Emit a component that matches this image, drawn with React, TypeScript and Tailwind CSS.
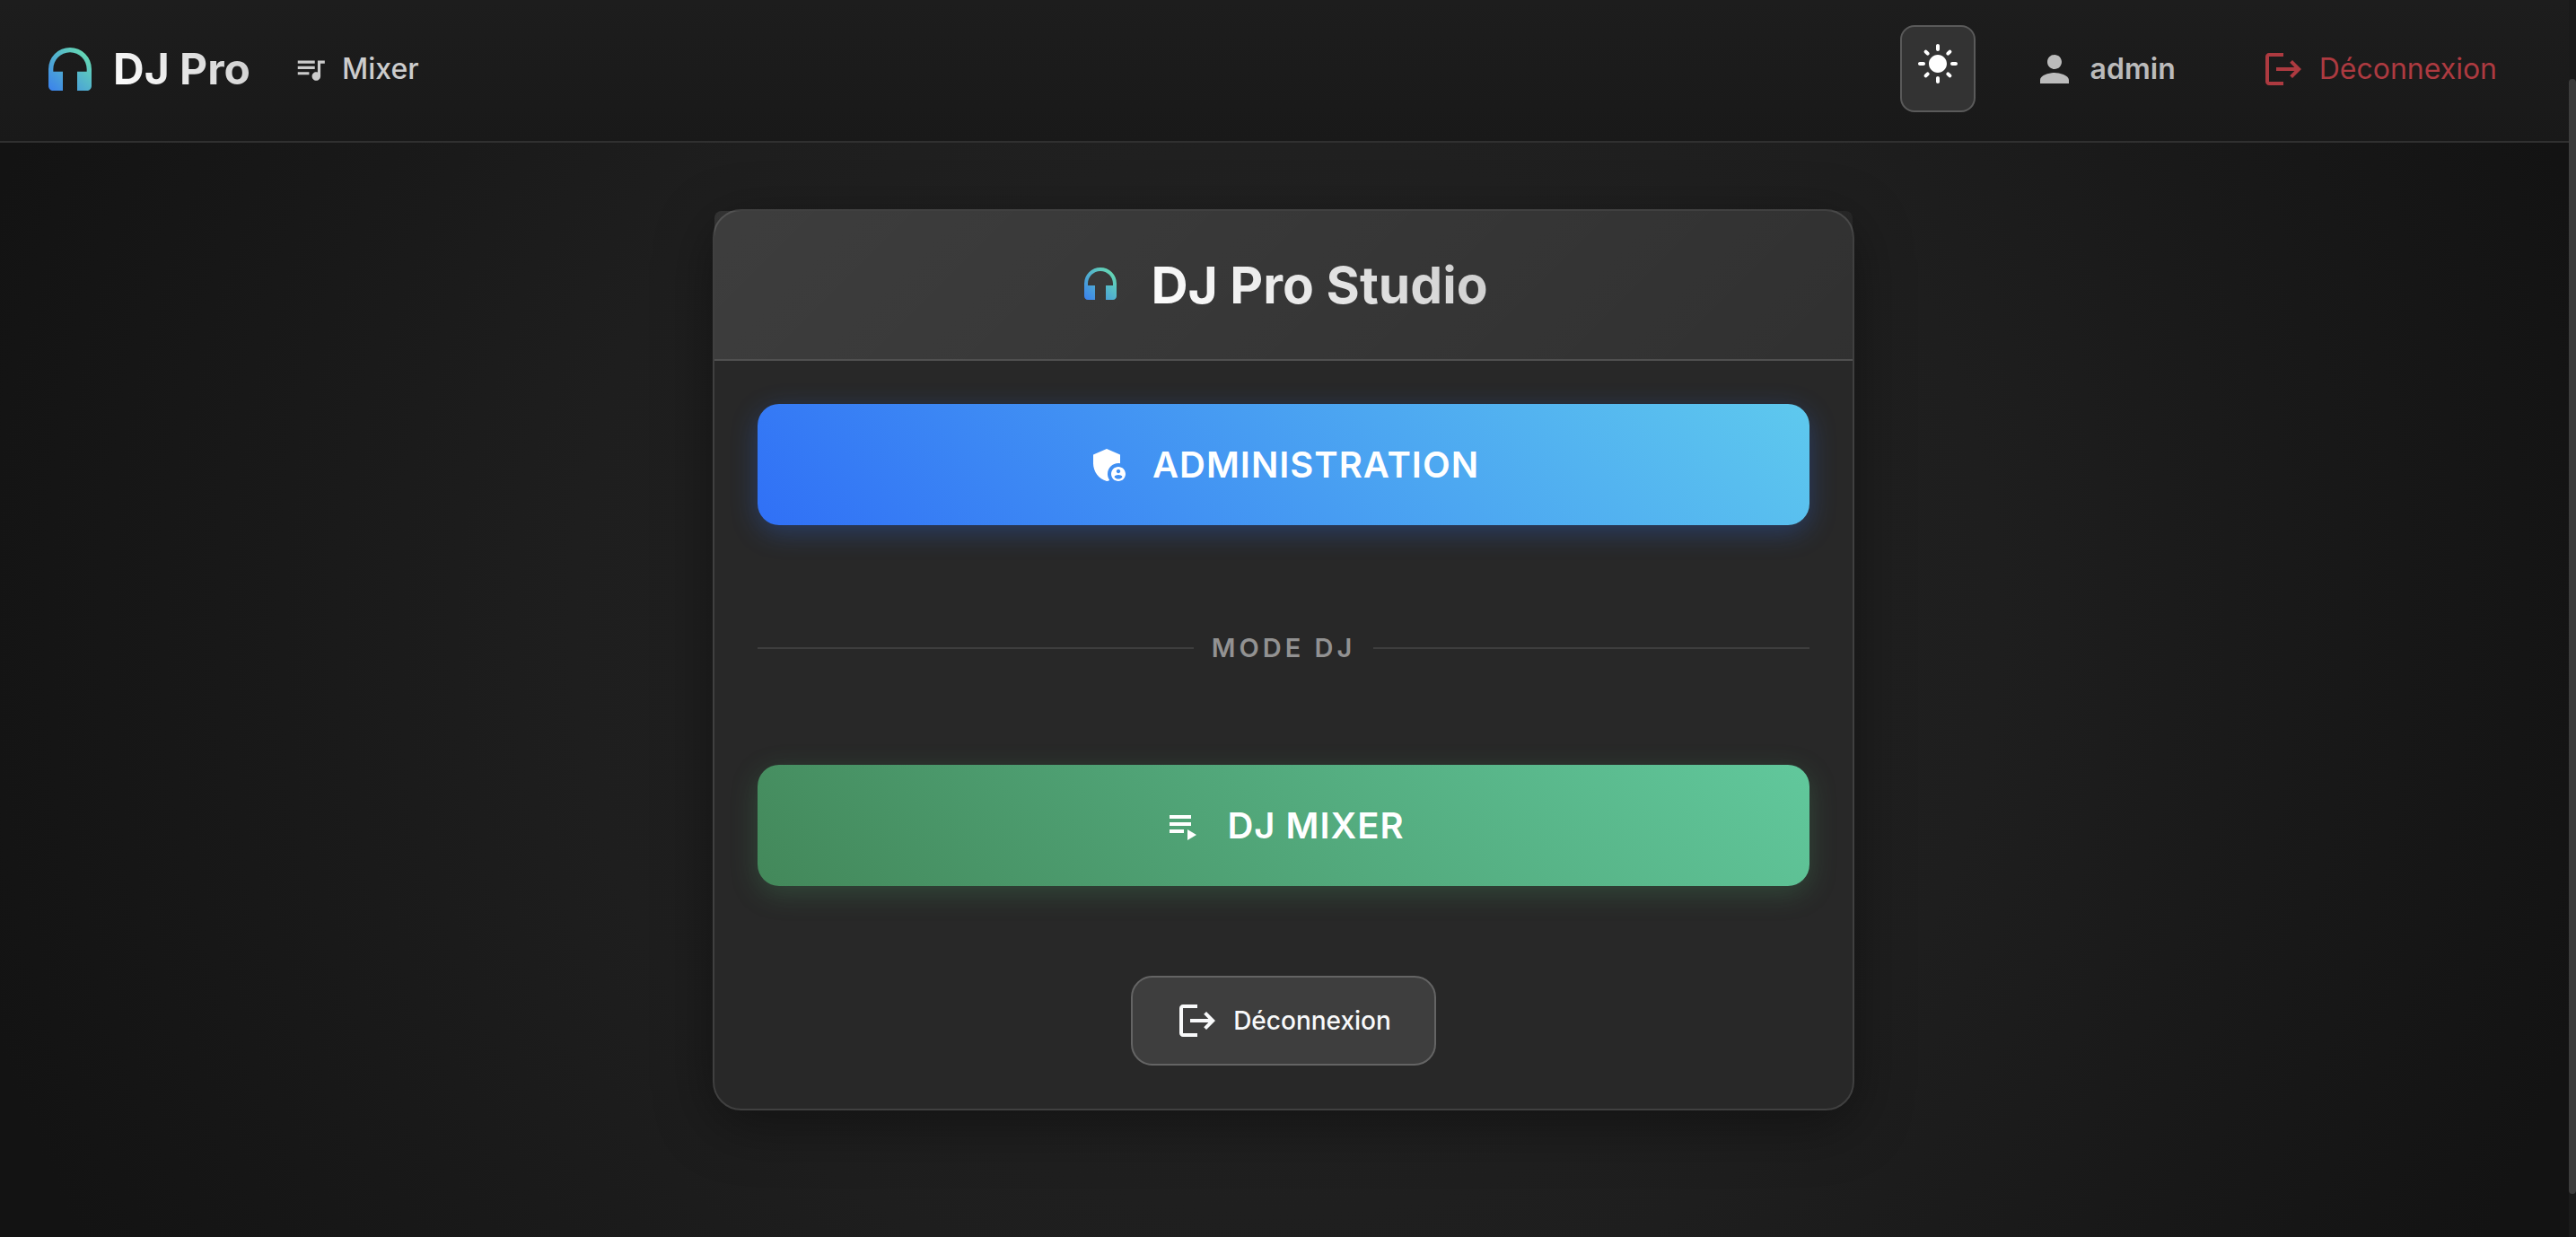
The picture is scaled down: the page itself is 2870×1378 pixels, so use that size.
import React from "react";

type IconProps = { d: string; className?: string };

function Icon({ d, className = "size-12" }: IconProps) {
  return (
    <svg viewBox="0 0 24 24" fill="currentColor" aria-hidden="true" className={`shrink-0 ${className}`}>
      <path d={d} />
    </svg>
  );
}

const QUEUE_MUSIC =
  "M15 6H3v2h12V6zm0 4H3v2h12v-2zM3 16h8v-2H3v2zM17 6v8.18c-.31-.11-.65-.18-1-.18-1.66 0-3 1.34-3 3s1.34 3 3 3 3-1.34 3-3V8h3V6h-5z";
const SUN =
  "M12 7c-2.76 0-5 2.24-5 5s2.24 5 5 5 5-2.24 5-5-2.24-5-5-5zM2 13h2c.55 0 1-.45 1-1s-.45-1-1-1H2c-.55 0-1 .45-1 1s.45 1 1 1zm18 0h2c.55 0 1-.45 1-1s-.45-1-1-1h-2c-.55 0-1 .45-1 1s.45 1 1 1zM11 2v2c0 .55.45 1 1 1s1-.45 1-1V2c0-.55-.45-1-1-1s-1 .45-1 1zm0 18v2c0 .55.45 1 1 1s1-.45 1-1v-2c0-.55-.45-1-1-1s-1 .45-1 1zM5.99 4.58a.996.996 0 0 0-1.41 0 .996.996 0 0 0 0 1.41l1.06 1.06c.39.39 1.03.39 1.41 0s.39-1.03 0-1.41L5.99 4.58zm12.37 12.37a.996.996 0 0 0-1.41 0 .996.996 0 0 0 0 1.41l1.06 1.06c.39.39 1.03.39 1.41 0a.996.996 0 0 0 0-1.41l-1.06-1.06zm1.06-10.96a.996.996 0 0 0 0-1.41.996.996 0 0 0-1.41 0l-1.06 1.06c-.39.39-.39 1.03 0 1.41s1.03.39 1.41 0l1.06-1.06zM7.05 18.36a.996.996 0 0 0 0-1.41.996.996 0 0 0-1.41 0l-1.06 1.06c-.39.39-.39 1.03 0 1.41s1.03.39 1.41 0l1.06-1.06z";
const PERSON =
  "M12 12c2.21 0 4-1.79 4-4s-1.79-4-4-4-4 1.79-4 4 1.79 4 4 4zm0 2c-2.67 0-8 1.34-8 4v2h16v-2c0-2.66-5.33-4-8-4z";
const LOGOUT =
  "M17 7l-1.41 1.41L18.17 11H8v2h10.17l-2.58 2.58L17 17l5-5zM4 5h8V3H4c-1.1 0-2 .9-2 2v14c0 1.1.9 2 2 2h8v-2H4V5z";
const ADMIN =
  "M17 11c.34 0 .67.04 1 .09V6.27L10.5 3 3 6.27v4.91c0 4.54 3.2 8.79 7.5 9.82.55-.13 1.08-.32 1.6-.55-.69-.98-1.1-2.17-1.1-3.45 0-3.31 2.69-6 6-6zM17 13c-2.21 0-4 1.79-4 4s1.79 4 4 4 4-1.79 4-4-1.79-4-4-4zm0 1.38c.62 0 1.12.51 1.12 1.12s-.51 1.12-1.12 1.12-1.12-.51-1.12-1.12.5-1.12 1.12-1.12zm0 5.37c-.93 0-1.74-.46-2.24-1.17.05-.72 1.51-1.08 2.24-1.08s2.19.36 2.24 1.08c-.5.71-1.31 1.17-2.24 1.17z";
const PLAYLIST_PLAY = "M4 10h12v2H4zM4 6h12v2H4zM4 14h8v2H4zM14 14v6l5-3z";

function Headphones({ id, className }: { id: string; className: string }) {
  return (
    <svg viewBox="0 0 24 24" aria-hidden="true" className={`shrink-0 ${className}`}>
      <defs>
        <linearGradient id={id} gradientUnits="userSpaceOnUse" x1="2" y1="22" x2="22" y2="2">
          <stop offset="0.05" stopColor="#3a80ee" />
          <stop offset="0.85" stopColor="#66dbb2" />
        </linearGradient>
      </defs>
      <path
        fill={`url(#${id})`}
        d="M12 3a9 9 0 0 0-9 9v7c0 1.1.9 2 2 2h4v-8H5v-1c0-3.87 3.13-7 7-7s7 3.13 7 7v1h-4v8h4c1.1 0 2-.9 2-2v-7a9 9 0 0 0-9-9z"
      />
    </svg>
  );
}

function Navbar() {
  return (
    <header className="flex items-center border-b-2 border-[#303030] bg-linear-to-b from-[#1d1d1d] to-[#191919] pt-7 pr-20 pb-8 pl-[46px]">
      <a href="#accueil" className="flex items-center gap-4">
        <Headphones id="brand-gradient" className="size-16" />
        <span className="bg-linear-45/srgb from-white to-[#cccccc] bg-clip-text text-5xl font-bold text-transparent">
          DJ Pro
        </span>
      </a>
      <a href="#mixer" className="ml-12 flex items-center gap-4 text-[32px] font-medium text-[#cccccc]">
        <Icon d={QUEUE_MUSIC} className="size-[38px]" />
        Mixer
      </a>
      <div className="ml-auto flex items-center">
        <button
          type="button"
          aria-label="Changer de thème"
          className="flex h-[97px] w-[84px] items-center justify-center rounded-2xl border-2 border-[#5a5a5a] bg-[#333333] pb-3 text-white"
        >
          <Icon d={SUN} />
        </button>
        <span className="ml-16 flex items-center gap-4 text-[32px] font-semibold text-[#bbbbbb]">
          <Icon d={PERSON} />
          admin
        </span>
        <a href="#deconnexion" className="ml-24 flex items-center gap-4 text-[32px] text-[#ad3a40]">
          <Icon d={LOGOUT} />
          Déconnexion
        </a>
      </div>
    </header>
  );
}

function StudioCard() {
  return (
    <section className="w-full max-w-[1272px] rounded-[32px] border-2 border-[#404040] bg-[#282828] shadow-[0_16px_64px_rgba(0,0,0,0.4)]">
      <div className="flex items-center justify-center gap-8 rounded-t-lg border-b-2 border-[#505050] bg-linear-135/srgb from-white/10 to-white/4 py-11">
        <Headphones id="title-gradient" className="mb-1 size-12" />
        <h1 className="bg-linear-45/srgb from-white to-[#cccccc] bg-clip-text text-[57px] leading-[77px] font-bold text-transparent">
          DJ Pro Studio
        </h1>
      </div>
      <div className="flex flex-col p-12">
        <button
          type="button"
          className="flex items-center justify-center gap-6 rounded-3xl bg-linear-45/srgb from-[#3070f6] to-[#5ec9ee] py-9 text-[40px] leading-[63px] font-semibold tracking-wide text-white shadow-[0_8px_30px_rgba(48,112,246,0.3)]"
        >
          <Icon d={ADMIN} />
          ADMINISTRATION
        </button>
        <div className="mt-[115px] mb-27 flex items-center gap-5 text-[29px] leading-11 font-semibold tracking-[4px] text-[#929292]">
          <span className="h-0.5 flex-1 bg-[#3e3e3e]" />
          MODE DJ
          <span className="h-0.5 flex-1 bg-[#3e3e3e]" />
        </div>
        <button
          type="button"
          className="flex items-center justify-center gap-6 rounded-3xl bg-linear-45/srgb from-[#43885a] to-[#61c89c] py-9 text-[40px] leading-[63px] font-semibold tracking-wide text-white shadow-[0_8px_30px_rgba(72,150,100,0.3)]"
        >
          <Icon d={PLAYLIST_PLAY} />
          DJ MIXER
        </button>
        <button
          type="button"
          className="mt-25 flex items-center gap-4 self-center rounded-3xl border-2 border-[#646464] bg-[#3e3e3e] px-12 py-6 text-[28px] leading-12 font-medium text-[#f8f9fa]"
        >
          <Icon d={LOGOUT} />
          Déconnexion
        </button>
      </div>
    </section>
  );
}

export default function App() {
  return (
    <div className="flex min-h-screen bg-[#131313] font-['Inter',sans-serif]">
      <div className="flex min-w-0 flex-1 flex-col bg-[radial-gradient(circle_at_center,#242424_0%,#1e1e1e_50%,#131313_95%)]">
        <Navbar />
        <main className="flex flex-1 items-start justify-center pt-[74px] pr-[26px] pb-16 pl-6">
          <StudioCard />
        </main>
      </div>
      <div className="flex w-2 flex-col bg-[#1a1a1a] pt-22 pb-12">
        <span className="flex-1 rounded-full bg-[#3c3c3c]" />
      </div>
    </div>
  );
}
